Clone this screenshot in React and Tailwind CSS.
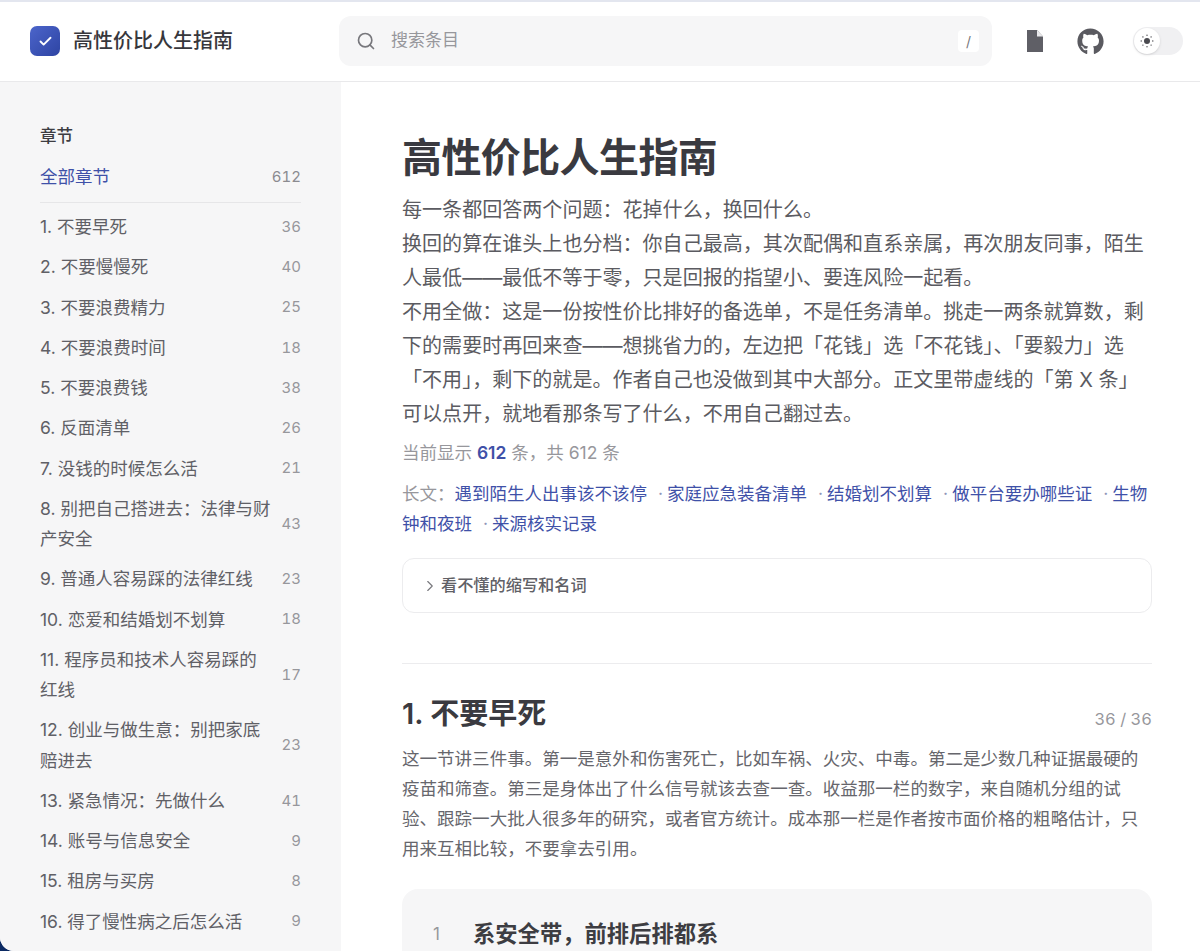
// App.jsx
import React from 'react';
import { Search, Check, ChevronRight } from 'lucide-react';
import { FaGithub } from 'react-icons/fa';

const chapters = [
  ['1. 不要早死', 36],
  ['2. 不要慢慢死', 40],
  ['3. 不要浪费精力', 25],
  ['4. 不要浪费时间', 18],
  ['5. 不要浪费钱', 38],
  ['6. 反面清单', 26],
  ['7. 没钱的时候怎么活', 21],
  ['8. 别把自己搭进去：法律与财产安全', 43],
  ['9. 普通人容易踩的法律红线', 23],
  ['10. 恋爱和结婚划不划算', 18],
  ['11. 程序员和技术人容易踩的红线', 17],
  ['12. 创业与做生意：别把家底赔进去', 23],
  ['13. 紧急情况：先做什么', 41],
  ['14. 账号与信息安全', 9],
  ['15. 租房与买房', 8],
  ['16. 得了慢性病之后怎么活', 9],
];

const articles = ['遇到陌生人出事该不该停', '家庭应急装备清单', '结婚划不划算', '做平台要办哪些证', '生物钟和夜班', '来源核实记录'];

// small sun with dotted rays, the theme toggle's knob
function SunDots() {
  return (
    <svg width="14" height="14" viewBox="0 0 14 14" fill="#4a4a50">
      <circle cx="7" cy="7" r="3" />
      <circle cx="7" cy="1.2" r=".7" />
      <circle cx="7" cy="12.8" r=".7" />
      <circle cx="1.2" cy="7" r=".7" />
      <circle cx="12.8" cy="7" r=".7" />
      <circle cx="2.9" cy="2.9" r=".7" />
      <circle cx="11.1" cy="2.9" r=".7" />
      <circle cx="2.9" cy="11.1" r=".7" />
      <circle cx="11.1" cy="11.1" r=".7" />
    </svg>
  );
}

function Header() {
  return (
    <header className="h-[82px] shrink-0 pb-[1px] flex items-center bg-white border-b border-[#e9e9eb] border-t-2 border-t-[#e3e6ef]">
      <div className="w-[339px] shrink-0 flex items-center pl-[30px]">
        <div className="w-[30px] h-[30px] rounded-[7px] bg-gradient-to-br from-[#4c65cb] to-[#2e44a3] flex items-center justify-center">
          <Check size={15} strokeWidth={3} className="text-white" />
        </div>
        <span className="ml-[13px] text-[20px] font-medium text-[#37373c]">高性价比人生指南</span>
      </div>
      <div className="w-[653px] h-[50px] rounded-xl bg-[#f6f6f7] flex items-center pl-[17px] pr-[13px]">
        <Search size={20} className="text-[#77777c]" />
        <span className="ml-[15px] flex-1 text-[17px] text-[#97979c]">搜索条目</span>
        <span className="w-[21px] h-[22px] rounded bg-white flex items-center justify-center text-[14px] text-[#77777c]">/</span>
      </div>
      <div className="ml-[34px] w-[18px] flex justify-center">
        <svg width="16" height="22" viewBox="0 0 16 22">
          <path d="M0 0h10l6 6.5V22H0z" fill="#5f5f66" />
          <path d="M10 0v6.5h6z" fill="#e9e9ec" />
        </svg>
      </div>
      <FaGithub size={27} className="ml-[33px] text-[#5a5a60]" />
      <div className="ml-[29px] w-[50px] h-[28px] rounded-full bg-[#f0f0f2] p-[1px] flex items-center">
        <div className="w-[26px] h-[26px] rounded-full bg-white shadow-sm flex items-center justify-center">
          <SunDots />
        </div>
      </div>
    </header>
  );
}

function Sidebar() {
  return (
    <aside className="w-[341px] shrink-0 bg-[#f6f6f7] pl-[40px] pr-[40px] pt-[42px]">
      <div className="text-[16.5px] leading-[24px] font-medium text-[#3d3d42]">章节</div>
      <div className="mt-[9px] flex items-center justify-between h-[40px]">
        <span className="text-[17.5px] text-[#3f51a8]">全部章节</span>
        <span className="text-[15px] tabular-nums text-[#8b8b90]">612</span>
      </div>
      <div className="mt-[5px] mb-[4px] h-px bg-[#e6e6e8]" />
      {chapters.map(([name, count]) => (
        <div key={name} className="flex items-center justify-between py-[5px]">
          <span className="w-[232px] text-[17.5px] leading-[30.25px] text-[#606066]">{name}</span>
          <span className="text-[15px] tabular-nums text-[#97979c]">{count}</span>
        </div>
      ))}
    </aside>
  );
}

function Main() {
  return (
    <main className="flex-1 bg-white pl-[61px] pr-[48px] pt-[44px]">
      <h1 className="text-[40px] leading-[64px] font-semibold text-[#3a3a40] tracking-[-0.6px]">高性价比人生指南</h1>
      <div className="mt-[3px] text-[20.06px] leading-[34px] text-[#5b5b61]">
        <p>每一条都回答两个问题：花掉什么，换回什么。</p>
        <p>换回的算在谁头上也分档：你自己最高，其次配偶和直系亲属，再次朋友同事，陌生人最低——最低不等于零，只是回报的指望小、要连风险一起看。</p>
        <p>不用全做：这是一份按性价比排好的备选单，不是任务清单。挑走一两条就算数，剩下的需要时再回来查——想挑省力的，左边把「花钱」选「不花钱」、「要毅力」选「不用」，剩下的就是。作者自己也没做到其中大部分。正文里带虚线的「第 X 条」可以点开，就地看那条写了什么，不用自己翻过去。</p>
      </div>
      <p className="mt-[7px] text-[17.5px] leading-[30px] text-[#97979c]">
        当前显示 <span className="font-semibold text-[#3f51a8]">612</span> 条，共 612 条
      </p>
      <p className="mt-[11px] text-[17.5px] leading-[30px] text-[#97979c]">
        长文：
        {articles.map((a, i) => (
          <span key={a}>
            {i > 0 && <span className="ml-[11px] mr-[4px] text-[#8f96b8]">·</span>}
            <span className="text-[#3f51a8]">{a}</span>
          </span>
        ))}
      </p>
      <div className="mt-[19px] h-[55px] rounded-xl border border-[#ececee] flex items-center pl-[18px] text-[16.2px] font-medium text-[#606066]">
        <ChevronRight size={18} strokeWidth={1.5} className="text-[#77777c] mr-[2px]" />
        看不懂的缩写和名词
      </div>
      <div className="mt-[50px] h-px bg-[#ececee]" />
      <div className="mt-[28px] flex items-end justify-between">
        <h2 className="text-[29px] leading-[44px] font-semibold text-[#3a3a40]">1. 不要早死</h2>
        <span className="pb-[3px] text-[16.5px] leading-[28px] tabular-nums text-[#97979c]">36 / 36</span>
      </div>
      <p className="mt-[8px] text-[17.55px] leading-[30px] text-[#66666c]">
        这一节讲三件事。第一是意外和伤害死亡，比如车祸、火灾、中毒。第二是少数几种证据最硬的疫苗和筛查。第三是身体出了什么信号就该去查一查。收益那一栏的数字，来自随机分组的试验、跟踪一大批人很多年的研究，或者官方统计。成本那一栏是作者按市面价格的粗略估计，只用来互相比较，不要拿去引用。
      </p>
      <div className="mt-[25px] h-[120px] rounded-2xl bg-[#f6f6f7] pl-[31px] pt-[30px] flex items-start">
        <span className="w-[40px] text-[17px] leading-[30px] text-[#97979c]">1</span>
        <span className="text-[22.3px] leading-[30px] font-semibold text-[#3d3d42]">系安全带，前排后排都系</span>
      </div>
    </main>
  );
}

export default function App() {
  return (
    <div className="h-[951px] overflow-hidden bg-[#0b2a63] font-['Inter','Noto_Sans_CJK_SC',sans-serif]">
      <div className="h-full rounded-bl-[14px] overflow-hidden bg-white flex flex-col">
        <Header />
        <div className="flex flex-1 min-h-0">
          <Sidebar />
          <Main />
        </div>
      </div>
    </div>
  );
}
